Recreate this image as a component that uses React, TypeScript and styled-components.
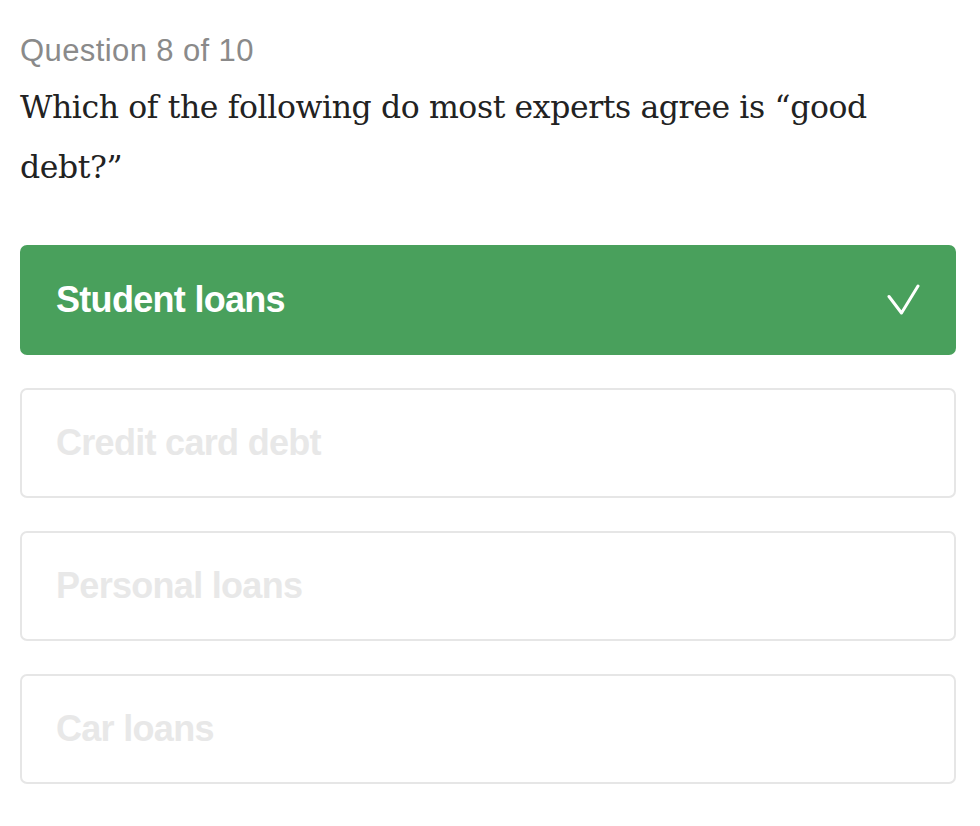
import React from 'react'
import styled, { createGlobalStyle } from 'styled-components'

const GlobalStyle = createGlobalStyle`
  body {
    margin: 0;
    background: #ffffff;
  }
`

const StyledQuiz = styled.main`
  padding: 27px 24px 0 20px;
  display: flex;
  flex-direction: column;

  & .counter {
    margin: 0 0 2px;
    font-family: 'Liberation Sans', Arial, sans-serif;
    font-size: 31px;
    line-height: 48px;
    color: #8a8a8a;
    letter-spacing: 0.4px;
  }

  & .question {
    margin: 0 0 48px;
    font-family: 'DejaVu Serif', 'Liberation Serif', serif;
    font-size: 31.5px;
    font-weight: normal;
    line-height: 60px;
    color: #222222;
    letter-spacing: -0.4px;
  }

  & .options {
    list-style: none;
    margin: 0;
    padding: 0;
    display: flex;
    flex-direction: column;
    gap: 33px;
  }
`

const Option = styled.li<{ $correct?: boolean }>`
  height: 110px;
  box-sizing: border-box;
  padding: 0 34px;
  display: flex;
  align-items: center;
  justify-content: space-between;
  border-radius: 7px;
  border: 2px solid ${(props) => (props.$correct ? '#49a05c' : '#e6e6e6')};
  background-color: ${(props) => (props.$correct ? '#49a05c' : '#ffffff')};
  color: ${(props) => (props.$correct ? '#ffffff' : '#e8e8e8')};
  font-family: 'Liberation Sans', Arial, sans-serif;
  font-weight: bold;
  font-size: 36px;
  letter-spacing: -0.7px;
`

const options = [
  { label: 'Student loans', correct: true },
  { label: 'Credit card debt' },
  { label: 'Personal loans' },
  { label: 'Car loans' },
]

const Check = () => (
  <svg width="34" height="34" viewBox="0 0 34 34" fill="none">
    <path
      d="M3 13.5 L15.5 30 L32 3"
      stroke="#ffffff"
      strokeWidth="3"
      strokeLinecap="round"
      strokeLinejoin="round"
    />
  </svg>
)

const App = () => {
  return (
    <StyledQuiz>
      <GlobalStyle />
      <p className="counter">Question 8 of 10</p>
      <h1 className="question">
        Which of the following do most experts agree is “good debt?”
      </h1>
      <ul className="options">
        {options.map((option) => (
          <Option key={option.label} $correct={option.correct}>
            <span>{option.label}</span>
            {option.correct && <Check />}
          </Option>
        ))}
      </ul>
    </StyledQuiz>
  )
}

export default App
